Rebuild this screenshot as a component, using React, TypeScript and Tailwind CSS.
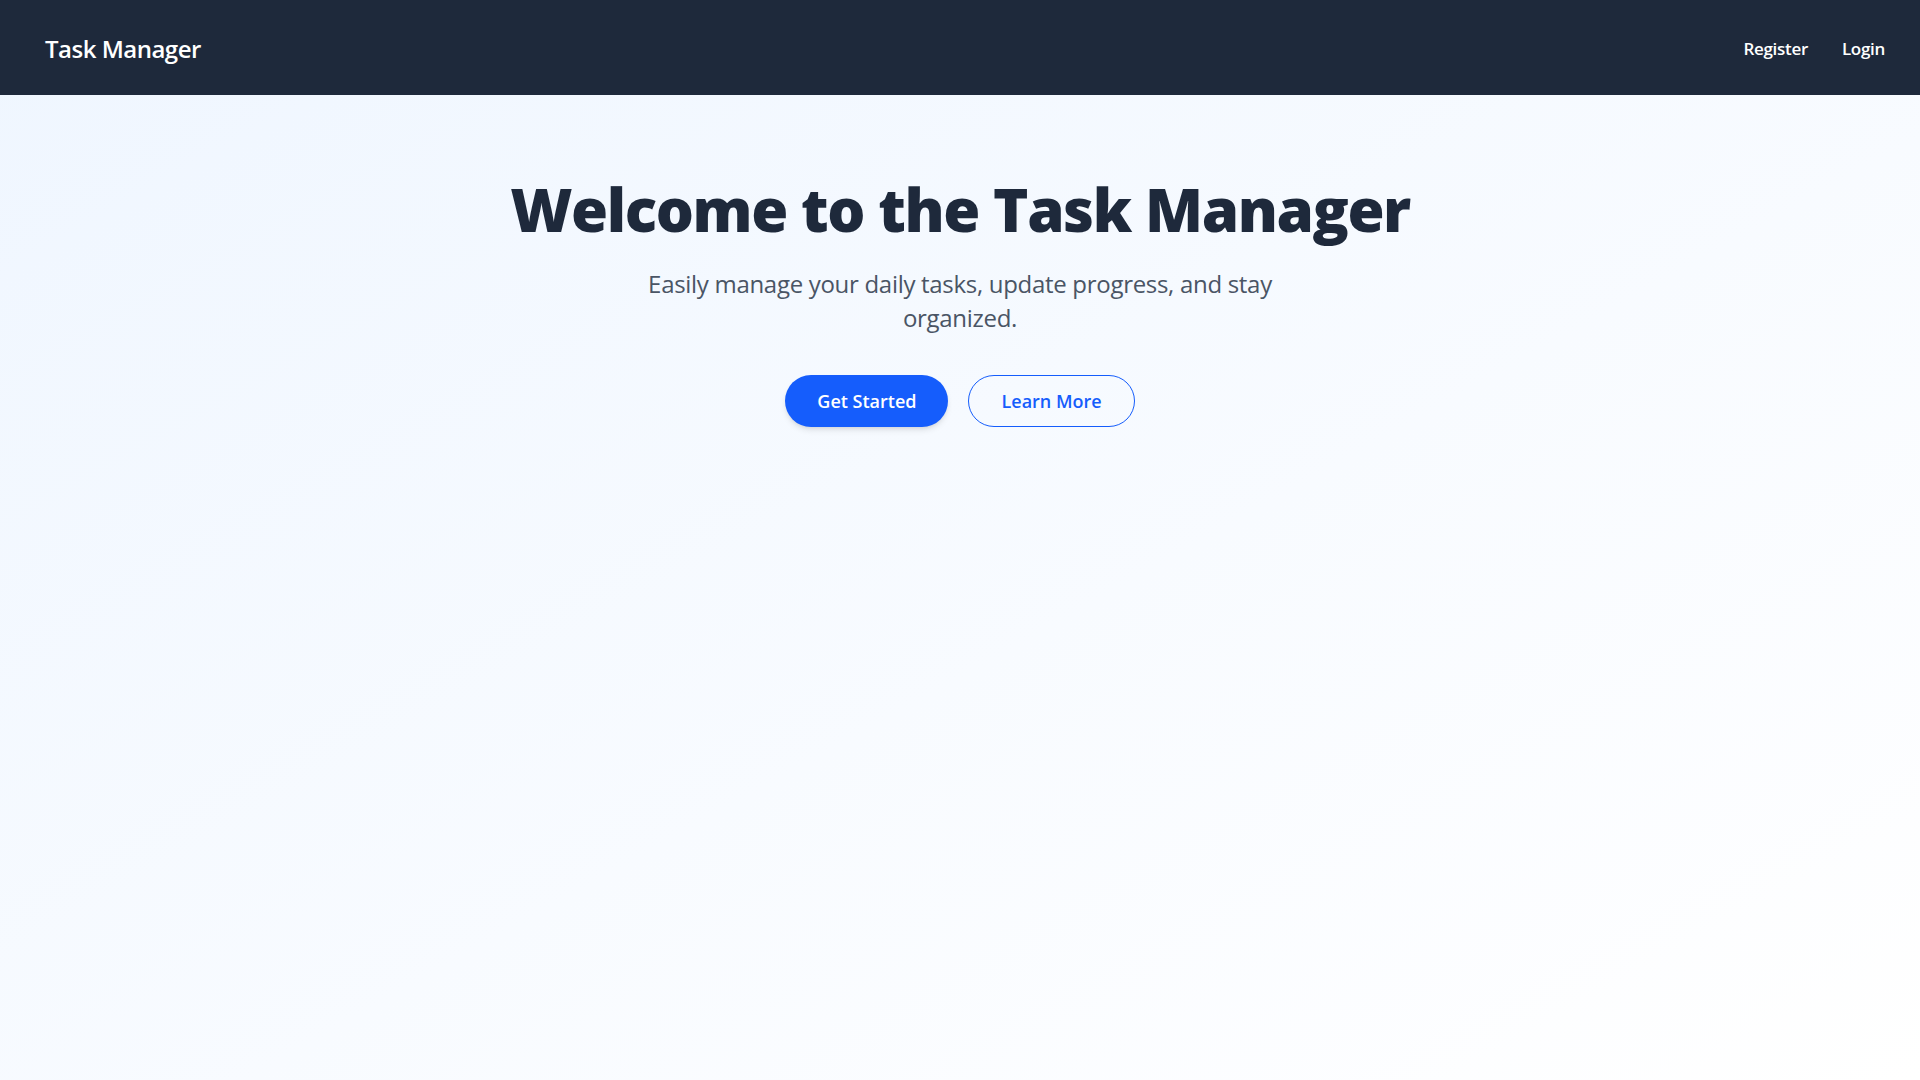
import { useState } from 'react';

const font = { fontFamily: '"Open Sans", "Noto Sans", "Liberation Sans", sans-serif' };

function Navbar() {
  return (
    <nav className="flex items-center justify-between bg-[#1e293b] h-[95px] pt-[2px] pl-[45px] pr-[35px]">
      <a href="#" className="text-[24px] font-semibold text-white tracking-[-0.5px]">
        Task Manager
      </a>
      <div className="flex items-center gap-[34px]">
        <a href="#" className="text-[17px] font-semibold text-white tracking-[-0.3px]">
          Register
        </a>
        <a href="#" className="text-[17px] font-semibold text-white tracking-[-0.3px]">
          Login
        </a>
      </div>
    </nav>
  );
}

export default function App() {
  const [clicked, setClicked] = useState('');

  return (
    <div style={font} className="min-h-screen flex flex-col bg-linear-to-br from-blue-50 to-white">
      <Navbar />

      {/* Hero */}
      <main className="flex flex-col items-center text-center px-4 pt-[76px]">
        <h1 className="text-[60px] leading-[76px] font-extrabold text-[#1e293b] tracking-[-1.4px]">
          Welcome to the Task Manager
        </h1>
        <p className="mt-[20px] max-w-[680px] text-[24px] leading-[34px] text-gray-600 tracking-[-0.3px]">
          Easily manage your daily tasks, update progress, and stay organized.
        </p>
        <div className="mt-[40px] flex items-center gap-5">
          <button
            onClick={() => setClicked('start')}
            className="h-[52px] px-8 rounded-full bg-blue-600 text-white text-[18px] font-semibold shadow-md hover:bg-blue-700 transition-colors"
          >
            Get Started
          </button>
          <button
            onClick={() => setClicked('learn')}
            className="h-[52px] px-8 rounded-full border border-blue-600 text-blue-600 text-[18px] font-semibold hover:bg-blue-50 transition-colors"
          >
            Learn More
          </button>
        </div>
        {clicked && <span className="sr-only">{clicked}</span>}
      </main>
    </div>
  );
}
